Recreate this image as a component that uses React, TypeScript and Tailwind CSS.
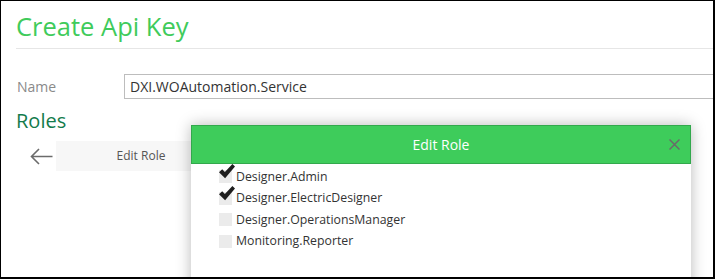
const roles = [
  { name: "Designer.Admin", checked: true },
  { name: "Designer.ElectricDesigner", checked: true },
  { name: "Designer.OperationsManager", checked: false },
  { name: "Monitoring.Reporter", checked: false },
];

function Check() {
  return (
    <svg
      className="absolute -top-[6px] left-0"
      width="16"
      height="15"
      viewBox="0 0 16 15"
    >
      <path d="M0 8.2 L3.2 5.2 L5.9 8.1 L13.4 0 L16 2.6 L6.1 14.2 Z" fill="#1f1f1f" />
    </svg>
  );
}

export default function App() {
  return (
    <div
      className="relative h-[279px] w-[715px] overflow-hidden border-t border-l border-r-2 border-b-2 border-black bg-white"
      style={{ fontFamily: '"Open Sans", "Liberation Sans", sans-serif' }}
    >
      <div className="pl-[15px]">
        <div className="border-b border-[#e6e6e6] pt-[8px] pb-[5px]">
          <h1 className="text-[25.5px] leading-[34px] text-[#3fcb5b]">
            Create Api Key
          </h1>
        </div>

        <div className="mt-[25px] flex items-center">
          <label className="w-[108px] shrink-0 pl-px text-[14px] text-[#8a8a8a]">
            Name
          </label>
          <div className="flex h-[25px] w-[620px] shrink-0 items-center border border-[#bdbdbd] px-[5px] text-[14px] text-[#333]">
            DXI.WOAutomation.Service
          </div>
        </div>

        <h2 className="mt-[9px] text-[20px] leading-[26px] text-[#137b4c]">
          Roles
        </h2>

        <div className="mt-[7px] flex items-center">
          <div className="flex w-[40px] justify-center pl-[11px]">
            <svg width="23" height="17" viewBox="0 0 23 17" fill="none">
              <path
                d="M22.5 8.5H1.5M9 1L1.5 8.5L9 16"
                stroke="#6b6b6b"
                strokeWidth="1.6"
              />
            </svg>
          </div>
          <div className="flex h-[30px] w-[170px] items-center justify-center bg-[#f7f7f7] text-[12px] text-[#555]">
            Edit Role
          </div>
        </div>
      </div>

      <div className="absolute top-[124px] left-[190px] h-[220px] w-[500px] bg-white shadow-[0_0_14px_rgba(0,0,0,0.28)]">
        <div className="relative flex h-[39px] items-center justify-center border border-[#32a84c] bg-[#3ecc5b] text-[14px] text-white">
          Edit Role
          <svg
            className="absolute top-[13px] right-[10px]"
            width="11"
            height="11"
            viewBox="0 0 11 11"
          >
            <path d="M0.5 0.5L10.5 10.5M10.5 0.5L0.5 10.5" stroke="#6a6a6a" strokeWidth="1.5" />
          </svg>
        </div>
        <div className="flex flex-col pt-[2px] pl-[28px]">
          {roles.map((r) => (
            <div key={r.name} className="flex h-[21.5px] items-center">
              <div className="relative h-[13px] w-[13px] bg-[#ebebeb]">
                {r.checked && <Check />}
              </div>
              <span className="ml-[4px] text-[12.3px] text-[#333]">{r.name}</span>
            </div>
          ))}
        </div>
      </div>
    </div>
  );
}
